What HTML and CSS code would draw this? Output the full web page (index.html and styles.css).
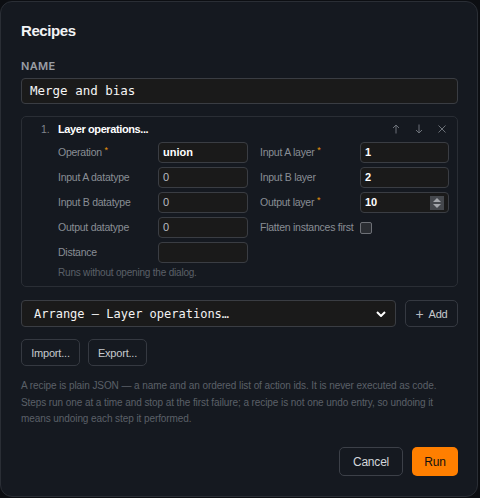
FILE: index.html
```html
<!DOCTYPE html>
<html lang="en">
<head>
    <meta charset="UTF-8">
    <meta name="viewport" content="width=device-width, initial-scale=1.0">
    <title>Recipes</title>
    <link rel="stylesheet" href="styles.css">
</head>
<body>
    <div class="dialog">
        <h2 class="dialog-title">Recipes</h2>

        <label class="field-caption">Name</label>
        <div class="text-input mono">Merge and bias</div>

        <div class="step-card">
            <div class="step-header">
                <span class="step-num">1.</span>
                <span class="step-title">Layer operations...</span>
                <div class="step-tools">
                    <span class="tool-icon">
                        <svg width="12" height="12" viewBox="0 0 12 12"><path d="M6 10.5V2M3 5L6 2 9 5" fill="none" stroke="currentColor" stroke-width="1"/></svg>
                    </span>
                    <span class="tool-icon">
                        <svg width="12" height="12" viewBox="0 0 12 12"><path d="M6 1.5V10M3 7L6 10 9 7" fill="none" stroke="currentColor" stroke-width="1"/></svg>
                    </span>
                    <span class="tool-icon">
                        <svg width="12" height="12" viewBox="0 0 12 12"><path d="M2.5 2.5l7 7M9.5 2.5l-7 7" fill="none" stroke="currentColor" stroke-width="1"/></svg>
                    </span>
                </div>
            </div>

            <div class="param-grid">
                <span class="param-label">Operation <em class="req">*</em></span>
                <div class="param-input filled">union</div>
                <span class="param-label">Input A layer <em class="req">*</em></span>
                <div class="param-input filled">1</div>

                <span class="param-label">Input A datatype</span>
                <div class="param-input">0</div>
                <span class="param-label">Input B layer</span>
                <div class="param-input filled">2</div>

                <span class="param-label">Input B datatype</span>
                <div class="param-input">0</div>
                <span class="param-label">Output layer <em class="req">*</em></span>
                <div class="param-input filled number">
                    <span>10</span>
                    <span class="spinner">
                        <svg width="14" height="14" viewBox="0 0 14 14"><path d="M3 6L7 2 11 6Z M3 8L7 12 11 8Z" fill="#a3a6ab"/></svg>
                    </span>
                </div>

                <span class="param-label">Output datatype</span>
                <div class="param-input">0</div>
                <span class="param-label">Flatten instances first</span>
                <div class="check-cell"><span class="checkbox"></span></div>

                <span class="param-label">Distance</span>
                <div class="param-input"></div>
            </div>

            <p class="step-note">Runs without opening the dialog.</p>
        </div>

        <div class="add-row">
            <div class="select-box mono">
                <span>Arrange — Layer operations…</span>
                <svg width="10" height="6" viewBox="0 0 10 6"><path d="M1 1l4 4 4-4" fill="none" stroke="#fff" stroke-width="2"/></svg>
            </div>
            <button class="btn btn-ghost btn-add"><span class="plus">+</span> Add</button>
        </div>

        <div class="io-row">
            <button class="btn btn-ghost">Import...</button>
            <button class="btn btn-ghost">Export...</button>
        </div>

        <p class="help-text">A recipe is plain JSON — a name and an ordered list of action ids. It is never executed as code. Steps run one at a time and stop at the first failure; a recipe is not one undo entry, so undoing it means undoing each step it performed.</p>

        <div class="dialog-footer">
            <button class="btn btn-ghost btn-lg">Cancel</button>
            <button class="btn btn-run btn-lg">Run</button>
        </div>
    </div>
</body>
</html>
```

FILE: styles.css
```css
/* Base */
:root {
    --dialog-bg: #151920;
    --field-bg: #1a1a1a;
    --field-border: #3a3d43;
    --card-border: #2a2e35;
    --text: #f2f3f5;
    --text-muted: #898e95;
    --text-dim: #5b6068;
    --accent: #ff7f00;
    --req: #e8930c;
}

* {
    margin: 0;
    padding: 0;
    box-sizing: border-box;
}

body {
    background: #0c0e12;
    font-family: 'Liberation Sans', Arial, sans-serif;
    color: var(--text);
}

.mono {
    font-family: 'DejaVu Sans Mono', 'Liberation Mono', monospace;
}

/* Dialog shell */
.dialog {
    width: 478px;
    height: 496px;
    margin-top: 1px;
    background: var(--dialog-bg);
    border: 1px solid #2a2e35;
    border-radius: 12px;
    padding: 20px 19px 20px 20px;
    display: flex;
    flex-direction: column;
}

.dialog-title {
    font-size: 15px;
    line-height: 18px;
    font-weight: 700;
    letter-spacing: -0.4px;
}

.field-caption {
    margin-top: 19px;
    font-family: 'Inter', sans-serif;
    font-size: 11px;
    font-weight: 600;
    line-height: 14px;
    letter-spacing: 0.3px;
    text-transform: uppercase;
    color: #9a9ea5;
}

.text-input {
    margin-top: 5px;
    height: 26px;
    background: var(--field-bg);
    border: 1px solid var(--field-border);
    border-radius: 4px;
    padding: 0 8px;
    font-size: 12.5px;
    line-height: 24px;
    color: #f5f5f5;
}

/* Step card */
.step-card {
    margin-top: 12px;
    border: 1px solid var(--card-border);
    border-radius: 5px;
    padding: 4px 9px 6px 19px;
}

.step-header {
    display: flex;
    align-items: center;
    height: 16px;
}

.step-num {
    width: 17px;
    font-size: 10.5px;
    color: #80858c;
}

.step-title {
    font-size: 11px;
    font-weight: 700;
    letter-spacing: -0.4px;
    color: #fff;
}

.step-tools {
    margin-left: auto;
    display: flex;
    gap: 11px;
}

.tool-icon {
    width: 12px;
    height: 12px;
    color: #6c7178;
    display: flex;
}

.param-grid {
    margin-top: 5px;
    margin-left: 17px;
    display: grid;
    grid-template-columns: 88px 90px 88px 89px;
    grid-auto-rows: 21px;
    column-gap: 12px;
    row-gap: 4px;
}

.param-label {
    font-size: 10.5px;
    letter-spacing: -0.25px;
    line-height: 21px;
    color: var(--text-muted);
    white-space: nowrap;
}

.req {
    font-style: normal;
    color: var(--req);
    font-size: 9px;
    line-height: 0;
    position: relative;
    top: -3px;
}

.param-input {
    height: 21px;
    background: var(--field-bg);
    border: 1px solid var(--field-border);
    border-radius: 4px;
    padding: 0 4px;
    font-size: 11px;
    line-height: 19px;
    color: #b9bcc0;
}

.param-input.filled {
    color: #fff;
    font-weight: 700;
}

.param-input.number {
    display: flex;
    justify-content: space-between;
    align-items: center;
    padding-right: 4px;
}

.spinner {
    width: 14px;
    height: 14px;
    background: #45484d;
    display: flex;
}

.check-cell {
    display: flex;
    align-items: center;
}

.checkbox {
    width: 12px;
    height: 12px;
    border: 1px solid #6d7076;
    border-radius: 2px;
    background: #2a2d32;
}

.step-note {
    margin-top: 3px;
    margin-left: 17px;
    font-size: 10px;
    line-height: 14px;
    letter-spacing: -0.2px;
    color: var(--text-dim);
}

/* Action picker */
.add-row {
    margin-top: 13px;
    display: flex;
    gap: 9px;
}

.select-box {
    flex: 1;
    height: 27px;
    background: var(--field-bg);
    border: 1px solid var(--field-border);
    border-radius: 4px;
    padding: 0 9px 0 12px;
    display: flex;
    justify-content: space-between;
    align-items: center;
    font-size: 12px;
    color: #f2f2f2;
}

.btn {
    font-family: 'Liberation Sans', Arial, sans-serif;
    font-size: 11px;
    letter-spacing: -0.2px;
    border-radius: 5px;
    cursor: pointer;
    height: 27px;
    padding: 0 8px;
}

.btn-ghost {
    background: transparent;
    border: 1px solid #353941;
    color: #c6c9ce;
}

.btn-add {
    width: 53px;
    display: flex;
    align-items: center;
    justify-content: center;
    gap: 5px;
}

.plus {
    font-size: 14px;
    font-weight: 300;
    color: #b8bbc0;
}

.io-row {
    margin-top: 12px;
    display: flex;
    gap: 8px;
}

.io-row .btn {
    width: 59px;
    height: 27px;
}

.help-text {
    margin-top: 12px;
    font-size: 10px;
    line-height: 16.5px;
    letter-spacing: -0.08px;
    color: var(--text-dim);
}

/* Footer */
.dialog-footer {
    margin-top: auto;
    display: flex;
    justify-content: flex-end;
    gap: 9px;
}

.btn-lg {
    height: 29px;
    font-size: 12px;
    padding: 0 10px;
}

.dialog-footer .btn-ghost {
    width: 64px;
    color: #d3d6da;
    border-color: #3c4048;
}

.btn-run {
    width: 46px;
    background: var(--accent);
    border: none;
    color: #111;
}
```
